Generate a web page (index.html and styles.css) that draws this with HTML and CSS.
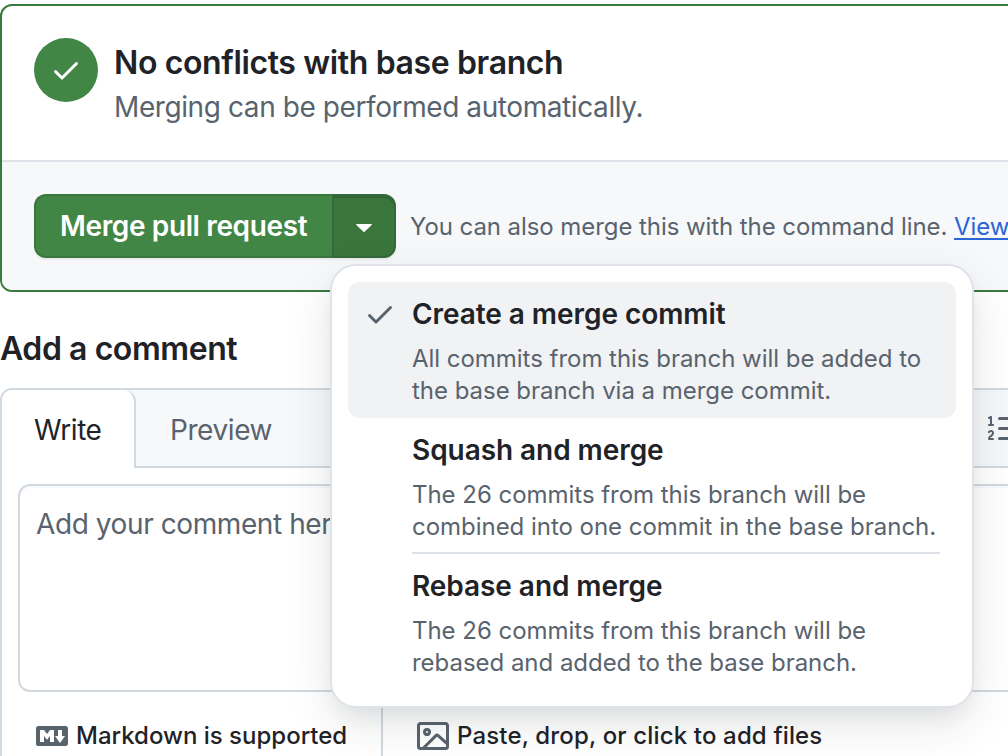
FILE: index.html
```html
<!DOCTYPE html>
<html lang="en">
<head>
<meta charset="utf-8">
<title>Merge pull request</title>
<link rel="stylesheet" href="styles.css">
</head>
<body>
<main class="page">
  <section class="merge-box">
    <div class="merge-status">
      <span class="status-badge">
        <svg class="icon" viewBox="0 0 16 16"><path d="M13.78 4.22a.75.75 0 0 1 0 1.06l-7.25 7.25a.75.75 0 0 1-1.06 0L2.22 9.28a.751.751 0 0 1 .018-1.042.751.751 0 0 1 1.042-.018L6 10.94l6.72-6.72a.75.75 0 0 1 1.06 0Z"/></svg>
      </span>
      <div class="status-text">
        <h3 class="status-title">No conflicts with base branch</h3>
        <p class="status-note">Merging can be performed automatically.</p>
      </div>
    </div>
    <div class="merge-actions">
      <div class="button-group">
        <button class="merge-button">Merge pull request</button>
        <button class="merge-toggle" aria-label="Select merge method"><svg class="caret" viewBox="0 0 16 8"><path d="M.8 0h14.400c.6 0 .9.6.5 1L8.600 7.700a.9.9 0 0 1-1.200 0L.3 1C-.1.6.2 0 .8 0Z"/></svg></button>
        <div class="merge-menu">
          <div class="menu-item menu-item-active">
            <svg class="icon menu-check" viewBox="0 0 16 16"><path d="M13.78 4.22a.75.75 0 0 1 0 1.06l-7.25 7.25a.75.75 0 0 1-1.06 0L2.22 9.28a.751.751 0 0 1 .018-1.042.751.751 0 0 1 1.042-.018L6 10.94l6.72-6.72a.75.75 0 0 1 1.06 0Z"/></svg>
            <div class="menu-body">
              <div class="menu-title">Create a merge commit</div>
              <div class="menu-desc">All commits from this branch will be added to<br>the base branch via a merge commit.</div>
            </div>
          </div>
          <div class="menu-item">
            <div class="menu-body menu-body-ruled">
              <div class="menu-title">Squash and merge</div>
              <div class="menu-desc">The 26 commits from this branch will be<br>combined into one commit in the base branch.</div>
            </div>
          </div>
          <div class="menu-item">
            <div class="menu-body">
              <div class="menu-title">Rebase and merge</div>
              <div class="menu-desc">The 26 commits from this branch will be<br>rebased and added to the base branch.</div>
            </div>
          </div>
        </div>
      </div>
      <p class="cli-note">You can also merge this with the command line. <a class="cli-link" href="#">View</a></p>
    </div>
  </section>

  <h2 class="comment-heading">Add a comment</h2>
  <section class="comment-box">
    <div class="tab-bar">
      <div class="tab tab-active">Write</div>
      <div class="tab">Preview</div>
      <div class="toolbar">
        <svg class="icon" viewBox="0 0 16 16"><path d="M5 3.25a.75.75 0 0 1 .75-.75h8.5a.75.75 0 0 1 0 1.5h-8.500A.75.75 0 0 1 5 3.250Zm0 5a.75.75 0 0 1 .75-.75h8.5a.75.75 0 0 1 0 1.500h-8.500A.75.75 0 0 1 5 8.250Zm0 5a.75.75 0 0 1 .75-.75h8.500a.75.75 0 0 1 0 1.500h-8.500a.75.75 0 0 1-.75-.75ZM.924 10.320a.5.5 0 0 1-.851-.525l.001-.001.001-.002.002-.004.007-.011c.097-.144.215-.273.348-.384.228-.19.588-.392 1.068-.392.468 0 .858.181 1.126.484.259.294.377.673.377 1.038 0 .987-.686 1.495-1.156 1.845l-.047.035c-.303.225-.522.4-.654.597h1.357a.5.5 0 0 1 0 1H.5a.5.5 0 0 1-.5-.5c0-1.005.692-1.520 1.167-1.875l.035-.025c.531-.396.8-.625.8-1.078a.57.57 0 0 0-.128-.376C1.806 10.068 1.695 10 1.500 10a.658.658 0 0 0-.429.163.835.835 0 0 0-.144.153ZM2.003 2.500V6h.503a.5.5 0 0 1 0 1H.5a.5.5 0 0 1 0-1h.503V3.308l-.28.14a.5.5 0 0 1-.446-.895l1.003-.5a.5.5 0 0 1 .723.447Z"/></svg>
      </div>
    </div>
    <div class="comment-input">Add your comment here...</div>
    <div class="comment-footer">
      <div class="footer-item footer-markdown">
        <svg class="icon" viewBox="0 0 16 16"><path d="M14.850 3c.63 0 1.150.52 1.140 1.150v7.700c0 .63-.51 1.150-1.150 1.150H1.150C.52 13 0 12.480 0 11.840V4.150C0 3.520.52 3 1.150 3ZM9 11V5H7L5.500 7 4 5H2v6h2V8l1.500 1.920L7 8v3Zm2.990.5L14.500 8H13V5h-2v3H9.500Z"/></svg>
        <span class="footer-label">Markdown is supported</span>
      </div>
      <div class="footer-item footer-files">
        <svg class="icon" viewBox="0 0 16 16"><path d="M16 13.250A1.750 1.750 0 0 1 14.250 15H1.750A1.750 1.750 0 0 1 0 13.250V2.750C0 1.784.784 1 1.750 1h12.500c.966 0 1.750.784 1.750 1.750ZM1.750 2.500a.25.25 0 0 0-.25.25v10.500c0 .138.112.25.25.25h.94l.03-.03 6.077-6.078a1.750 1.750 0 0 1 2.412-.06L14.500 10.310V2.750a.25.25 0 0 0-.25-.25Zm12.500 11a.25.25 0 0 0 .25-.25v-.917l-4.298-3.889a.25.25 0 0 0-.344.009L4.810 13.500ZM7 6a2 2 0 1 1-3.999.001A2 2 0 0 1 7 6ZM5.500 6a.5.5 0 1 0-1 0 .5.5 0 0 0 1 0Z"/></svg>
        <span class="footer-label files-label">Paste, drop, or click to add files</span>
      </div>
    </div>
  </section>
</main>
</body>
</html>
```
FILE: styles.css
```css
* { box-sizing: border-box; }

body {
  margin: 0;
  background: #fff;
  color: #1f2328;
  font-family: Inter, "Liberation Sans", sans-serif;
  -webkit-font-smoothing: antialiased;
}

h2, h3, p { margin: 0; }

.page {
  width: 1008px;
  height: 756px;
  padding-top: 4px;
  overflow: hidden;
  white-space: nowrap;
}

.icon {
  flex: none;
  width: 32px;
  height: 32px;
  fill: currentColor;
}

.merge-box {
  width: 1040px;
  height: 288px;
  border: 2px solid #3a7a3c;
  border-radius: 12px;
}

.merge-status {
  display: flex;
  gap: 16px;
  height: 154px;
  padding: 32px;
}

.status-badge {
  display: flex;
  align-items: center;
  justify-content: center;
  flex: none;
  width: 64px;
  height: 64px;
  border-radius: 50%;
  background: #428646;
  color: #fff;
}

.status-title {
  height: 48px;
  font-size: 32px;
  font-weight: 600;
  line-height: 50px;
  letter-spacing: -0.37px;
}

.status-note {
  font-size: 28px;
  line-height: 43px;
  letter-spacing: -0.41px;
  color: #59636e;
}

.merge-actions {
  display: flex;
  height: 130px;
  padding: 32px;
  border-top: 2px solid #dfe3e9;
  border-radius: 0 0 10px 10px;
  background: #f6f8fa;
}

.button-group {
  display: flex;
  flex: none;
  position: relative;
  width: 362px;
  height: 64px;
  border-radius: 12px;
  box-shadow: 0 2px 2px rgba(31, 35, 40, 0.06);
}

.merge-button,
.merge-toggle {
  padding: 0;
  border: 2px solid #3a773d;
  color: #fff;
  font-family: inherit;
}

.merge-button {
  width: 298px;
  padding-left: 24px;
  border-right: 0;
  border-radius: 12px 0 0 12px;
  background: #428646;
  font-size: 28px;
  font-weight: 600;
  line-height: 61px;
  text-align: left;
  letter-spacing: -0.37px;
}

.merge-toggle {
  display: flex;
  align-items: center;
  justify-content: center;
  width: 64px;
  border-color: #34693a;
  border-radius: 0 12px 12px 0;
  background: #3a763c;
  box-shadow: inset 0 2px 0 #2f6534;
}

.caret {
  width: 16px;
  height: 8px;
  margin-top: 3px;
  fill: #fff;
}

.merge-menu {
  position: absolute;
  top: 72px;
  left: 298px;
  z-index: 2;
  width: 640px;
  height: 440px;
  padding: 16px;
  border-radius: 24px;
  background: #fff;
  box-shadow: 0 0 0 2px #dfe3e9, 0 12px 24px -6px rgba(37, 41, 46, 0.09), 0 16px 48px 0 rgba(37, 41, 46, 0.12);
}

.menu-item {
  display: flex;
  justify-content: flex-end;
  height: 136px;
  padding: 0 16px;
  border-radius: 12px;
}

.menu-item-active {
  justify-content: space-between;
  background: #f1f2f4;
}

.menu-check {
  margin-top: 16px;
  color: #59636e;
}

.menu-body { width: 528px; }

.menu-body-ruled { border-bottom: 2px solid #dde2e8; }

.menu-title {
  height: 61px;
  font-size: 28px;
  font-weight: 600;
  line-height: 65px;
  letter-spacing: -0.06px;
}

.menu-desc {
  font-size: 24px;
  line-height: 32px;
  letter-spacing: -0.03px;
  color: #59636e;
}

.cli-note {
  margin-left: 14px;
  font-size: 24px;
  line-height: 65px;
  letter-spacing: -0.07px;
  color: #59636e;
}

.cli-link {
  color: #2c64d6;
  text-underline-offset: 3px;
  text-decoration-thickness: 2px;
}

.comment-heading {
  height: 96px;
  font-size: 32px;
  font-weight: 600;
  line-height: 114px;
  letter-spacing: -0.43px;
}

.comment-box {
  width: 1040px;
  height: 400px;
  border: 2px solid #d1d9e0;
  border-radius: 12px;
}

.tab-bar {
  display: flex;
  height: 78px;
  border-radius: 10px 10px 0 0;
  background: linear-gradient(#d1d9e0, #d1d9e0) 0 100% / 100% 2px no-repeat #f6f8fa;
}

.tab {
  width: 170px;
  padding-left: 34px;
  font-size: 28px;
  line-height: 80px;
  letter-spacing: -0.42px;
  color: #59636e;
}

.tab-active {
  width: 134px;
  padding-left: 32px;
  border-right: 2px solid #d1d9e0;
  border-radius: 10px 12px 0 0;
  background: #fff;
  color: #1f2328;
}

.toolbar {
  display: flex;
  flex: 1;
  padding: 22px 0 0 682px;
  color: #59636e;
}

.comment-input {
  height: 208px;
  margin: 16px;
  padding: 12px 16px;
  border: 2px solid #d1d9e0;
  border-radius: 12px;
  box-shadow: inset 0 2px 0 #f8f9fb;
  font-size: 28px;
  line-height: 52px;
  letter-spacing: -0.41px;
  color: #59636e;
}

.comment-footer {
  display: flex;
  height: 64px;
  margin-top: 4px;
}

.footer-item {
  display: flex;
  align-items: flex-start;
  padding-top: 12px;
  color: #59636e;
}

.footer-markdown {
  width: 381px;
  padding-left: 34px;
  border-right: 2px solid #d1d9e0;
}

.footer-files { padding-left: 34px; }

.footer-label {
  padding-left: 8px;
  color: #1f2328;
  font-size: 24px;
  font-weight: 500;
  line-height: 32px;
}

.files-label { letter-spacing: 0.15px; }
```
